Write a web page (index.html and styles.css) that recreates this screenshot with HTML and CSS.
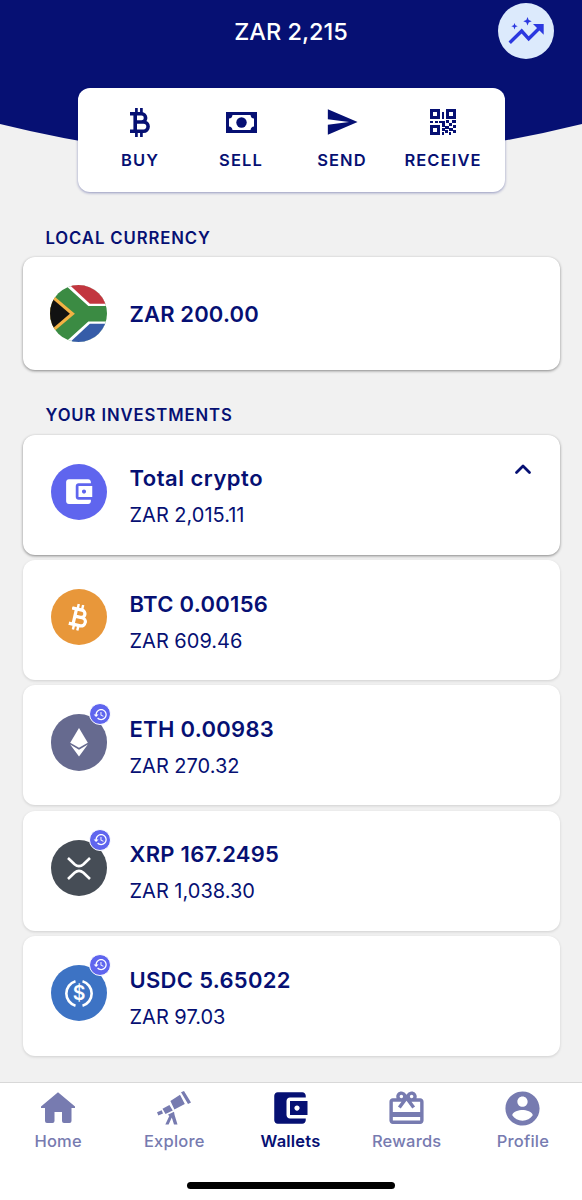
FILE: index.html
```html
<!DOCTYPE html>
<html lang="en">
<head>
    <meta charset="UTF-8">
    <meta name="viewport" content="width=device-width, initial-scale=1.0">
    <title>Wallets</title>
    <link rel="stylesheet" href="styles.css">
</head>
<body>
    <!-- shared icons -->
    <svg class="sprite" width="0" height="0">
        <symbol id="bitcoin" viewBox="0 0 20 29">
            <path d="M0 5.8H11.5A4.1 4.1 0 0 1 11.5 14H5.5M11.5 14H13.5A4.6 4.6 0 0 1 13.5 23.2H0M5.2 5.8V23.2" fill="none" stroke="currentColor" stroke-width="3.6"/>
            <path d="M6.4 0V5M11.4 0V5M6.4 24V29M11.4 24V29" fill="none" stroke="currentColor" stroke-width="2.7"/>
        </symbol>
        <symbol id="wallet" viewBox="0 0 24 24">
            <path d="M21 18v1c0 1.1-.9 2-2 2H5c-1.11 0-2-.9-2-2V5c0-1.1.89-2 2-2h14c1.1 0 2 .9 2 2v1h-9c-1.11 0-2 .9-2 2v8c0 1.1.89 2 2 2h9zm-9-2h10V8H12v8zm4-2.5c-.83 0-1.5-.67-1.5-1.5s.67-1.5 1.5-1.5 1.5.67 1.5 1.5-.67 1.5-1.5 1.5z" fill="currentColor"/>
        </symbol>
        <symbol id="history" viewBox="0 0 24 24">
            <path d="M13 3c-4.97 0-9 4.03-9 9H1l3.89 3.89.07.14L9 12H6c0-3.87 3.13-7 7-7s7 3.13 7 7-3.13 7-7 7c-1.93 0-3.68-.79-4.94-2.06l-1.42 1.42C8.27 19.99 10.51 21 13 21c4.97 0 9-4.03 9-9s-4.03-9-9-9zm-1 5v5l4.28 2.54.72-1.21-3.5-2.08V8H12z" fill="currentColor"/>
        </symbol>
    </svg>

    <header class="header">
        <svg class="header-bg" viewBox="0 0 582 162" preserveAspectRatio="none">
            <path d="M0 0H582V124Q291 196 0 124Z" fill="#061073"/>
        </svg>
        <div class="topbar">
            <h1 class="balance">ZAR 2,215</h1>
            <a class="insights" href="#">
                <svg width="56" height="56" viewBox="0 0 56 56">
                    <path d="M11.7 39.8L23.7 28L30.7 35.8L41.5 25" fill="none" stroke="#2b38e0" stroke-width="3.4"/>
                    <path d="M35 21H45.7V31.7Z" fill="#2b38e0"/>
                    <path d="M16.5 20L17.4 22.3L19.7 23.2L17.4 24.1L16.5 26.4L15.6 24.1L13.3 23.2L15.6 22.3ZM29.5 14L30.7 17L33.7 18.2L30.7 19.4L29.5 22.4L28.3 19.4L25.3 18.2L28.3 17Z" fill="#2b38e0"/>
                </svg>
            </a>
        </div>
        <div class="actions">
            <a class="action" href="#">
                <span class="action-icon"><svg width="20" height="29"><use href="#bitcoin"/></svg></span>
                BUY
            </a>
            <a class="action" href="#">
                <span class="action-icon">
                    <svg width="31" height="21" viewBox="0 0 31 21">
                        <path fill-rule="evenodd" d="M0 0H31V21H0ZM6.5 3Q6 6.5 3 6.5V14.5Q6 14.5 6.5 18H24.5Q25 14.5 28 14.5V6.5Q25 6.5 24.5 3Z" fill="currentColor"/>
                        <circle cx="15.5" cy="10.5" r="5.2" fill="currentColor"/>
                    </svg>
                </span>
                SELL
            </a>
            <a class="action" href="#">
                <span class="action-icon">
                    <svg width="34" height="34" viewBox="0 0 24 24"><path d="M2.01 21L23 12 2.01 3 2 10l15 2-15 2z" fill="currentColor"/></svg>
                </span>
                SEND
            </a>
            <a class="action" href="#">
                <span class="action-icon">
                    <svg width="26" height="26" viewBox="0 0 26 26" fill="currentColor">
                        <path fill-rule="evenodd" d="M0 0H10V10H0ZM3 3V7H7V3ZM16 0H26V10H16ZM19 3V7H23V3ZM0 16H10V26H0ZM3 19V23H7V19Z"/>
                        <path d="M12 3H14V10H12ZM0 12H3V14H0ZM5 12H8V14H5ZM9 12H15V18H12V14H9ZM16 11H19V14H16ZM19 14H22V17H19ZM22 11H26V14H22ZM12 19H15V22H12ZM15 17H19V20H15ZM23 16H26V19H23ZM19 19H23V22H19ZM12 23H14V26H12ZM15 21H18V24H15ZM19 23H21V26H19ZM23 21H26V24H23Z"/>
                    </svg>
                </span>
                RECEIVE
            </a>
        </div>
    </header>

    <main>
        <h2>LOCAL CURRENCY</h2>
        <div class="card raised local">
            <div class="coin">
                <svg width="57" height="57" viewBox="0 0 56.5 56.5">
                    <clipPath id="round"><circle cx="28.25" cy="28.25" r="28.25"/></clipPath>
                    <g clip-path="url(#round)">
                        <rect width="57" height="57" fill="#3b8b43"/>
                        <path d="M15 0L38 20.7H57V0ZM15 57L38 36.3H57V57Z" fill="#fff"/>
                        <path d="M19.5 0L39.5 18.5H57V0Z" fill="#c2363f"/>
                        <path d="M19.5 57L39.5 38.5H57V57Z" fill="#365ca8"/>
                        <path d="M-1 6.8L24.7 28.5L-1 50.2Z" fill="#f3b244"/>
                        <path d="M-1 10.8L19.7 28.5L-1 46.2Z" fill="#121212"/>
                    </g>
                </svg>
            </div>
            <div class="amounts"><strong>ZAR 200.00</strong></div>
        </div>

        <h2>YOUR INVESTMENTS</h2>
        <div class="card raised">
            <div class="coin total"><svg width="33" height="33"><use href="#wallet"/></svg></div>
            <div class="amounts">
                <strong class="name">Total crypto</strong>
                <span>ZAR 2,015.11</span>
            </div>
            <svg class="chevron" width="18" height="12" viewBox="0 0 18 12"><path d="M2.5 9.5L9 3L15.5 9.5" fill="none" stroke="#061073" stroke-width="2.8" stroke-linecap="round" stroke-linejoin="round"/></svg>
        </div>
        <div class="card">
            <div class="coin btc"><svg class="tilt" width="18" height="27"><use href="#bitcoin"/></svg></div>
            <div class="amounts">
                <strong>BTC 0.00156</strong>
                <span>ZAR 609.46</span>
            </div>
        </div>
        <div class="card">
            <div class="coin eth">
                <svg width="56" height="56" viewBox="0 0 56 56">
                    <path d="M28 14L36.8 28.7L28 33.8L19.2 28.7Z" fill="#fff"/>
                    <path d="M19.2 30.6L28 35.8L36.8 30.6L28 42.5Z" fill="#fff"/>
                </svg>
                <span class="badge"><svg width="15" height="15"><use href="#history"/></svg></span>
            </div>
            <div class="amounts">
                <strong>ETH 0.00983</strong>
                <span>ZAR 270.32</span>
            </div>
        </div>
        <div class="card">
            <div class="coin xrp">
                <svg width="56" height="56" viewBox="0 0 56 56">
                    <path d="M17 18L23.5 24.2Q28 28.2 32.5 24.2L39 18M17 39L23.5 32.8Q28 28.8 32.5 32.8L39 39" fill="none" stroke="#fff" stroke-width="2.6"/>
                </svg>
                <span class="badge"><svg width="15" height="15"><use href="#history"/></svg></span>
            </div>
            <div class="amounts">
                <strong>XRP 167.2495</strong>
                <span>ZAR 1,038.30</span>
            </div>
        </div>
        <div class="card">
            <div class="coin usdc">
                <svg width="56" height="56" viewBox="0 0 56 56">
                    <path d="M24.5 16.3A12.7 12.7 0 0 0 24.5 40.7M31.5 16.3A12.7 12.7 0 0 1 31.5 40.7" fill="none" stroke="#fff" stroke-width="2.6"/>
                    <text class="dollar" x="28" y="35.4" text-anchor="middle">$</text>
                </svg>
                <span class="badge"><svg width="15" height="15"><use href="#history"/></svg></span>
            </div>
            <div class="amounts">
                <strong>USDC 5.65022</strong>
                <span>ZAR 97.03</span>
            </div>
        </div>
    </main>

    <nav class="tabs">
        <ul>
            <li><a href="#">
                <svg width="34" height="34" viewBox="0 0 34 34"><path d="M17 1.3L34 15.5V17H30.5V30Q30.5 32 28.5 32H23Q21 32 21 30V21H13.5V30Q13.5 32 11.5 32H6Q4 32 4 30V17H0V15.5Z" fill="currentColor"/></svg>
                Home
            </a></li>
            <li><a href="#">
                <svg width="34" height="34" viewBox="0 0 34 34" fill="currentColor">
                    <path d="M0 21.3L4.7 19.3L6 22.5L1.3 24.5ZM5.5 17.8L12.4 14.1L15.8 19.5L8.5 23ZM13.4 10L23 3.8L27.8 13L17.4 18.6ZM24 1.3L27 0L34 11.6L31 13Z"/>
                    <path d="M10.8 23.7L17 20.7L17.6 24L20.5 33.5H17L14.8 26.5L11.6 33.5H8.3L12.3 25Z"/>
                </svg>
                Explore
            </a></li>
            <li><a class="active" href="#">
                <svg width="42" height="42"><use href="#wallet"/></svg>
                Wallets
            </a></li>
            <li><a href="#">
                <svg width="41" height="41" viewBox="0 0 24 24"><path d="M20 6h-2.18c.11-.31.18-.65.18-1 0-1.66-1.34-3-3-3-1.05 0-1.96.54-2.5 1.35l-.5.67-.5-.68C10.96 2.54 10.05 2 9 2 7.34 2 6 3.34 6 5c0 .35.07.69.18 1H4c-1.11 0-1.99.89-1.99 2L2 19c0 1.11.89 2 2 2h16c1.11 0 2-.89 2-2V8c0-1.11-.89-2-2-2zm-5-2c.55 0 1 .45 1 1s-.45 1-1 1-1-.45-1-1 .45-1 1-1zM9 4c.55 0 1 .45 1 1s-.45 1-1 1-1-.45-1-1 .45-1 1-1zm11 15H4v-2h16v2zm0-5H4V8h5.08L7 10.83 8.62 12 11 8.76l1-1.36 1 1.36L15.38 12 17 10.83 14.92 8H20v6z" fill="currentColor"/></svg>
                Rewards
            </a></li>
            <li><a href="#">
                <svg width="41" height="41" viewBox="0 0 24 24"><path d="M12 2C6.48 2 2 6.48 2 12s4.48 10 10 10 10-4.48 10-10S17.52 2 12 2zm0 3c1.66 0 3 1.34 3 3s-1.34 3-3 3-3-1.34-3-3 1.34-3 3-3zm0 14.2c-2.5 0-4.71-1.28-6-3.22.03-1.99 4-3.08 6-3.08 1.99 0 5.97 1.09 6 3.08-1.29 1.94-3.5 3.22-6 3.22z" fill="currentColor"/></svg>
                Profile
            </a></li>
        </ul>
        <div class="home-indicator"></div>
    </nav>
</body>
</html>
```
FILE: styles.css
```css
* {
    box-sizing: border-box;
}

body {
    margin: 0;
    height: 1200px;
    display: flex;
    flex-direction: column;
    overflow: hidden;
    background-color: #f1f1f1;
    color: #061073;
    font-family: Inter, "Liberation Sans", sans-serif;
}

a {
    color: inherit;
    text-decoration: none;
}

svg {
    display: block;
    flex-shrink: 0;
}

.sprite {
    position: absolute;
}

/* header */
.header {
    position: relative;
    height: 193px;
}

.header-bg {
    position: absolute;
    top: 0;
    left: 0;
    width: 100%;
    height: 162px;
}

.topbar {
    position: relative;
    height: 88.4px;
    padding: 3px 28px 0;
    display: grid;
    grid-template-columns: 56px 1fr 56px;
    align-items: start;
}

.balance {
    grid-column: 2;
    margin: 0;
    color: #ffffff;
    font-size: 23.5px;
    font-weight: 500;
    line-height: 57px;
    text-align: center;
}

.insights {
    width: 56px;
    height: 56px;
    border-radius: 50%;
    background-color: #dceafc;
}

.actions {
    position: relative;
    width: 427px;
    height: 104px;
    margin: 0 auto;
    padding: 14px 12px 0;
    display: grid;
    grid-template-columns: repeat(4, 101px);
    background-color: #ffffff;
    border-radius: 12px;
    box-shadow: 0 1px 3px rgba(6, 16, 115, 0.4);
}

.action {
    display: flex;
    flex-direction: column;
    align-items: center;
    font-size: 16.5px;
    font-weight: 600;
    line-height: 20px;
    letter-spacing: 1.1px;
}

.action-icon {
    height: 40px;
    margin-bottom: 8px;
    display: flex;
    align-items: center;
}

/* cards */
main {
    flex: 1;
    padding: 0 22.5px;
}

h2 {
    margin: 0;
    padding: 35px 23px 9.4px;
    font-size: 16.7px;
    font-weight: 600;
    line-height: 20px;
    letter-spacing: 0.9px;
}

.card {
    height: 120px;
    margin-bottom: 5.35px;
    padding: 0 28px;
    display: flex;
    align-items: center;
    background-color: #ffffff;
    border-radius: 12px;
    box-shadow: 0 1px 3px rgba(0, 0, 0, 0.14);
}

.raised {
    box-shadow: 0 1px 3px rgba(0, 0, 0, 0.45);
}

.coin {
    position: relative;
    width: 56.5px;
    height: 56.5px;
    margin-right: 22.5px;
    margin-bottom: 6px;
    display: flex;
    align-items: center;
    justify-content: center;
    border-radius: 50%;
    color: #ffffff;
}

.total {
    background-color: #5f65ee;
}

.btc {
    background-color: #e8973a;
}

.eth {
    background-color: #666a8f;
}

.xrp {
    background-color: #464d56;
}

.usdc {
    background-color: #3d73c4;
}

.tilt {
    transform: rotate(13deg);
}

.dollar {
    fill: #ffffff;
    font-size: 19.5px;
    font-weight: 600;
}

.badge {
    position: absolute;
    top: -11px;
    right: -4px;
    width: 22px;
    height: 22px;
    display: flex;
    align-items: center;
    justify-content: center;
    border: 1px solid #ffffff;
    border-radius: 50%;
    background-color: #5f65ee;
}

.amounts {
    flex: 1;
    display: flex;
    flex-direction: column;
    gap: 9px;
    padding-top: 4px;
}

.amounts strong {
    font-size: 22px;
    font-weight: 600;
    line-height: 28px;
    letter-spacing: 0.3px;
}

.amounts .name {
    letter-spacing: 0.5px;
}

.amounts span {
    font-size: 20px;
    line-height: 28px;
}

.chevron {
    align-self: flex-start;
    margin-top: 28px;
}

.local {
    height: 113px;
    margin-bottom: 0;
}

.local .coin {
    margin-bottom: 0;
}

.local .amounts {
    padding-top: 1px;
}

.local strong {
    letter-spacing: 0.15px;
}

/* bottom tabs */
.tabs {
    height: 118px;
    border-top: 1px solid #d8d8d8;
    background-color: #ffffff;
}

.tabs ul {
    height: 99px;
    margin: 0;
    padding: 0 1px 0 0;
    display: grid;
    grid-template-columns: repeat(5, 1fr);
    list-style: none;
}

.tabs a {
    display: grid;
    grid-template-rows: 50px 16px;
    justify-items: center;
    align-items: center;
    color: #777bb0;
    font-size: 16.5px;
    font-weight: 500;
    line-height: 16px;
    letter-spacing: 0.2px;
}

.tabs .active {
    color: #061073;
    font-weight: 600;
}

.home-indicator {
    width: 208px;
    height: 7px;
    margin: 0 auto;
    border-radius: 4px;
    background-color: #000000;
}
```
